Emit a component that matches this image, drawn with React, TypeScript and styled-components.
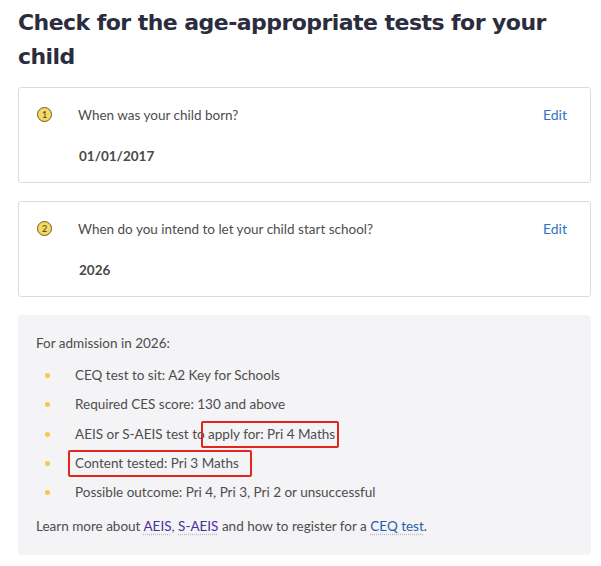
import React from "react";
import styled, { createGlobalStyle } from "styled-components";

const GlobalStyle = createGlobalStyle`
  body {
    margin: 0;
    background: #ffffff;
    font-family: Lato, "Open Sans", sans-serif;
    color: #4a4a4a;
  }
`;

const Page = styled.div`
  padding: 6px 10px 0 18px;
`;

const Title = styled.h1`
  margin: 0 0 13px;
  font-family: "DejaVu Sans", sans-serif;
  font-size: 22px;
  font-weight: 700;
  line-height: 34px;
  letter-spacing: -0.55px;
  color: #2b2c3d;
`;

const Card = styled.div`
  border: 1px solid #dcdcdc;
  border-radius: 3px;
  padding: 18px 23px 18px 18px;
  margin-bottom: 18px;
`;

const CardHead = styled.div`
  display: flex;
  align-items: center;
  gap: 26px;
`;

const Badge = styled.span`
  width: 13px;
  height: 13px;
  border-radius: 50%;
  background: #f6d95e;
  border: 1px solid #6b5a22;
  font-size: 9px;
  line-height: 13px;
  text-align: center;
  color: #3a3a3a;
  flex-shrink: 0;
`;

const Question = styled.span`
  flex: 1;
  font-size: 13.5px;
  color: #4d4d4d;
`;

const Edit = styled.a`
  font-size: 14px;
  color: #2f73c2;
  cursor: pointer;
`;

const Answer = styled.div`
  margin: 25px 0 0 42px;
  font-size: 13.5px;
  font-weight: 700;
  color: #4a4a4a;
`;

const Info = styled.div`
  background: #f4f3f5;
  border-radius: 4px;
  padding: 20px 18px 21px 18px;
  font-size: 13.5px;
  color: #4d4d4d;
`;

const Lead = styled.p`
  margin: 0 0 16px;
`;

const List = styled.ul`
  list-style: none;
  margin: 0;
  padding: 0;
  display: flex;
  flex-direction: column;
  gap: 12.25px;
`;

const Item = styled.li`
  display: flex;
  align-items: center;
  line-height: 17px;
  &::before {
    content: "";
    width: 5px;
    height: 5px;
    border-radius: 50%;
    background: #f2c94c;
    margin: 0 25px 0 9px;
    flex-shrink: 0;
  }
`;

const Mark = styled.span<{ $left: number; $right: number }>`
  position: relative;
  &::after {
    content: "";
    position: absolute;
    left: -${(p) => p.$left}px;
    right: -${(p) => p.$right}px;
    top: -5px;
    bottom: -5px;
    border: 2px solid #e0261d;
    border-radius: 2px;
  }
`;

const Footer = styled.p`
  margin: 17px 0 0;
`;

const Link = styled.a<{ $tone: string }>`
  color: ${(p) => p.$tone};
  text-decoration: underline dotted #b9b6d0;
  text-underline-offset: 3px;
`;

const steps = [
  { n: 1, q: "When was your child born?", a: "01/01/2017" },
  { n: 2, q: "When do you intend to let your child start school?", a: "2026" },
];

export default function App() {
  return (
    <>
      <GlobalStyle />
      <Page>
        <Title>Check for the age-appropriate tests for your child</Title>
        {steps.map((s) => (
          <Card key={s.n}>
            <CardHead>
              <Badge>{s.n}</Badge>
              <Question>{s.q}</Question>
              <Edit>Edit</Edit>
            </CardHead>
            <Answer>{s.a}</Answer>
          </Card>
        ))}
        <Info>
          <Lead>For admission in 2026:</Lead>
          <List>
            <Item>CEQ test to sit: A2 Key for Schools</Item>
            <Item>Required CES score: 130 and above</Item>
            <Item>
              AEIS or S-AEIS test to&nbsp;
              <Mark $left={7} $right={4}>apply for: Pri 4 Maths</Mark>
            </Item>
            <Item>
              <Mark $left={7} $right={13}>Content tested: Pri 3 Maths</Mark>
            </Item>
            <Item>Possible outcome: Pri 4, Pri 3, Pri 2 or unsuccessful</Item>
          </List>
          <Footer>
            Learn more about <Link $tone="#4b2f9c">AEIS</Link>,{" "}
            <Link $tone="#4b2f9c">S-AEIS</Link> and how to register for a{" "}
            <Link $tone="#1f5fa8">CEQ test</Link>.
          </Footer>
        </Info>
      </Page>
    </>
  );
}
